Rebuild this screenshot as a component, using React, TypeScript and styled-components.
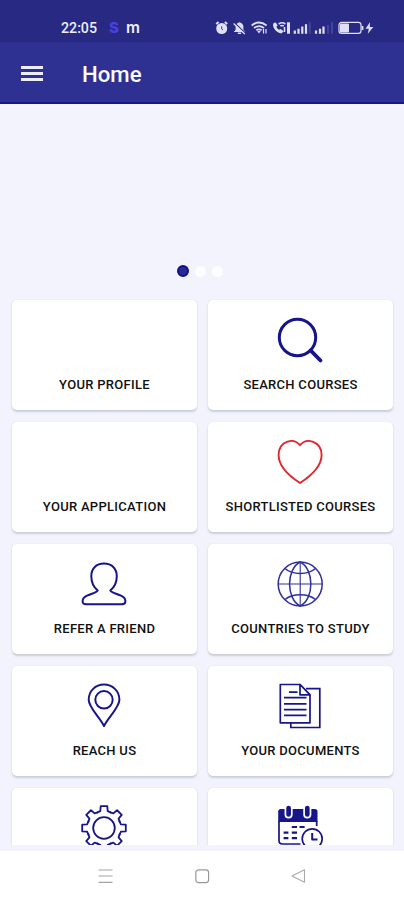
import React from 'react';
import styled, { createGlobalStyle } from 'styled-components';

const NAVY = '#17158a';

const GlobalStyle = createGlobalStyle`
  *, *::before, *::after { box-sizing: border-box; }
  body { margin: 0; font-family: Roboto, "Liberation Sans", sans-serif; }
`;

const Screen = styled.div`
  display: flex;
  flex-direction: column;
  width: 404px;
  height: 900px;
  overflow: hidden;
  background: #f2f3fc;
`;

const StatusBar = styled.div`
  display: flex;
  flex: none;
  align-items: center;
  height: 42px;
  padding: 14px 28px 0 61px;
  background: #272983;
  color: #eeeefb;
`;

const Clock = styled.span`
  width: 48px;
  font-size: 14.2px;
  font-weight: 500;
  line-height: 16px;
`;

const AppMark = styled.span<{ $color: string; $size: number; $width: number; $weight: number }>`
  width: ${(p) => p.$width}px;
  font-family: Inter, sans-serif;
  font-size: ${(p) => p.$size}px;
  font-weight: ${(p) => p.$weight};
  line-height: 16px;
  color: ${(p) => p.$color};
`;

const StatusIcons = styled.svg`
  display: block;
  margin-left: auto;
`;

const AppBar = styled.header`
  display: flex;
  flex: none;
  align-items: center;
  gap: 39px;
  height: 62px;
  padding: 2px 21px 0;
  background: #2e3192;
  border-bottom: 2px solid #17158a;
`;

const MenuButton = styled.button`
  display: flex;
  flex-direction: column;
  gap: 3px;
  width: 22px;
  padding: 0;
  border: 0;
  background: none;
`;

const MenuLine = styled.span`
  height: 3px;
  background: #ececfa;
`;

const Title = styled.h1`
  margin: 2px 0 0;
  font-size: 22.2px;
  font-weight: 500;
  line-height: 28px;
  color: #fafaff;
`;

const Content = styled.main`
  flex: none;
  height: 741px;
  overflow: hidden;
`;

const Carousel = styled.section`
  display: flex;
  align-items: flex-end;
  justify-content: center;
  gap: 6px;
  height: 196px;
  padding: 0 4px 23px 0;
`;

const Dot = styled.span<{ $active?: boolean }>`
  width: ${(p) => (p.$active ? 12 : 11)}px;
  height: ${(p) => (p.$active ? 12 : 11)}px;
  border: ${(p) => (p.$active ? '2px solid #10108c' : '0')};
  border-radius: 50%;
  background: ${(p) => (p.$active ? '#272a92' : '#fdfdff')};
`;

const Grid = styled.section`
  display: grid;
  grid-template-columns: 185px 185px;
  grid-auto-rows: 110px;
  gap: 12px 11px;
  padding-left: 12px;
`;

const Card = styled.article`
  display: flex;
  flex-direction: column;
  align-items: center;
  padding-top: 16px;
  border-radius: 5px;
  background: #fff;
  box-shadow: 0 1.5px 2px rgba(60, 64, 90, 0.2), 0 0 2px rgba(60, 64, 90, 0.06);
`;

const IconSlot = styled.div`
  width: 49px;
  height: 48px;
  margin-bottom: 12px;
`;

const Label = styled.span`
  font-size: 13px;
  font-weight: 500;
  line-height: 18px;
  letter-spacing: 0.29px;
  white-space: nowrap;
  color: #111;
`;

const BottomNav = styled.nav`
  display: flex;
  flex: none;
  align-items: center;
  justify-content: space-between;
  height: 49px;
  margin-top: 6px;
  padding: 0 97px;
  background: #fff;
`;

const Icon = ({ color = NAVY, width = 1.7, children }: { color?: string; width?: number; children: React.ReactNode }) => (
  <svg width="48" height="48" viewBox="0 0 48 48" fill="none" stroke={color} strokeWidth={width} strokeLinejoin="round">
    {children}
  </svg>
);

const SearchIcon = () => (
  <Icon width={3}>
    <circle cx="21.5" cy="21.5" r="18.2" />
    <path d="M34.6 34.4 L44.5 44.5" strokeWidth="3.8" strokeLinecap="round" />
  </Icon>
);

const HeartIcon = () => (
  <Icon color="#e3242b" width={1.9}>
    <path d="M24 7.2 C20.5 3 15.5 2.2 11.5 3.6 C5.5 5.7 2.6 11 2.6 17 C2.6 28 13.5 38.2 24 45 C34.5 38.2 45.6 28 45.6 17 C45.6 11 42.5 5.7 36.5 3.6 C32.5 2.2 27.5 3 24 7.2Z" />
  </Icon>
);

const PersonIcon = () => (
  <Icon width={2}>
    <path d="M17.7 30.5 C13.5 27 11.3 21.8 11.3 16.2 C11.3 8.5 16.3 3.5 24 3.5 C31.7 3.5 36.8 8.5 36.8 16.2 C36.8 21.8 34.5 27 30.3 30.5 C32 33 37 33.8 41 35.7 C44.4 37.3 45.4 39 45.4 41.3 C45.4 43.4 44.3 44.2 42 44.2 H6 C3.7 44.2 2.6 43.4 2.6 41.3 C2.6 39 3.6 37.3 7 35.7 C11 33.8 16 33 17.7 30.5Z" />
  </Icon>
);

const GlobeIcon = () => (
  <Icon width={1.5} color="#30309b">
    <circle cx="24.2" cy="24" r="22" />
    <path d="M24.2 2 V46 M2.2 24 H46.2" strokeWidth="1.1" />
    <path d="M24.2 2 C10 9 10 39 24.2 46 C38.4 39 38.4 9 24.2 2Z" />
    <path d="M9 8.5 C16 15 32.4 15 39.4 8.5 M9 39.5 C16 33 32.4 33 39.4 39.5" />
  </Icon>
);

const PinIcon = () => (
  <Icon width={2}>
    <path d="M24 44 C20 35.5 8.7 25.5 8.7 17.7 C8.7 9 15.5 2.6 24 2.6 C32.5 2.6 39.4 9 39.4 17.7 C39.4 25.5 28 35.5 24 44Z" />
    <circle cx="24" cy="17.8" r="8.7" />
  </Icon>
);

const DocumentsIcon = () => (
  <Icon width={1.7}>
    <path d="M14.8 41 V45.5 H43.8 V6.7 H30" strokeLinejoin="miter" />
    <path d="M4.3 2.5 H24 L34 13 V40.8 H4.3Z" fill="#fff" />
    <path d="M24 2.5 V12.8 H34Z" fill="#fff" />
    <path d="M13 10.2 H21.5 M8 15.7 H30.5 M8 21.8 H30.5 M8 27.7 H30.5 M8 33.3 H30.5" />
  </Icon>
);

const GEAR_TOOTH = 'M-7.3 -15.2 L-3.7 -16.9 L-3.3 -21.8 H3.3 L3.7 -16.9 L7.3 -15.2';

const GearIcon = () => (
  <Icon width={1.8}>
    <circle cx="24" cy="24" r="10.8" />
    {[0, 45, 90, 135, 180, 225, 270, 315].map((angle) => (
      <path key={angle} d={GEAR_TOOTH} transform={`translate(24 24) rotate(${angle})`} />
    ))}
  </Icon>
);

const CalendarIcon = () => (
  <Icon width={1.7}>
    <path d="M2.2 18 V7.5 Q2.2 5 5 5 H38.8 Q41.5 5 41.5 7.5 V18Z" fill={NAVY} stroke="none" />
    <path d="M3 17 V36.5 Q3 40 6.5 40 H24.5 M40.7 17 V22" />
    <rect x="9.4" y="0.8" width="6.4" height="12.8" rx="3.2" fill={NAVY} stroke="#fff" />
    <rect x="28.1" y="0.8" width="6.4" height="12.8" rx="3.2" fill={NAVY} stroke="#fff" />
    <path d="M15.8 23 H21 M23.5 23 H28.6 M7.6 28.6 H12.4 M15.8 28.6 H21 M7.6 34.2 H12.4 M15.8 34.2 H21" strokeWidth="2.2" />
    <circle cx="36.2" cy="34.8" r="10" fill="#fff" />
    <path d="M36.2 29 V35.5 H41.5" strokeWidth="2" />
  </Icon>
);

const tiles: { label: string; icon?: React.ReactNode }[] = [
  { label: 'YOUR PROFILE' },
  { label: 'SEARCH COURSES', icon: <SearchIcon /> },
  { label: 'YOUR APPLICATION' },
  { label: 'SHORTLISTED COURSES', icon: <HeartIcon /> },
  { label: 'REFER A FRIEND', icon: <PersonIcon /> },
  { label: 'COUNTRIES TO STUDY', icon: <GlobeIcon /> },
  { label: 'REACH US', icon: <PinIcon /> },
  { label: 'YOUR DOCUMENTS', icon: <DocumentsIcon /> },
  { label: '', icon: <GearIcon /> },
  { label: '', icon: <CalendarIcon /> },
];

const SystemIcons = () => (
  <StatusIcons width="162" height="16" viewBox="0 0 162 16" fill="none" stroke="#dfdff5" strokeWidth="1.4">
    {/* alarm */}
    <circle cx="7.7" cy="8.5" r="5.5" fill="#dfdff5" stroke="none" />
    <path d="M2.2 4 L4.6 2 M10.8 2 L13.2 4" strokeWidth="2" />
    <path d="M7.7 6.3 V8.8 L9 10" stroke="#272983" strokeWidth="0.9" />
    {/* muted bell */}
    <path d="M19.8 12 L21.6 9.7 V7 Q21.6 3.4 25.4 2.3 Q29.4 3.4 29.4 7 V9.7 L31.2 12Z M23.8 12.6 H27.2 V14 H23.8Z" fill="#dfdff5" stroke="none" />
    <path d="M20.4 2.7 L31.4 13.3" stroke="#272983" strokeWidth="1.2" />
    <path d="M19.6 3.4 L30.8 14" strokeWidth="1.4" />
    {/* wifi */}
    <path d="M37.6 5.5 Q45 -0.5 52.6 5.5 M40 8 Q45 4.2 50 8 M42.4 10.2 Q45 8.4 47.6 10.2" strokeWidth="1.8" />
    <path d="M43.2 11 H46.8 L45 13.4Z" fill="#dfdff5" stroke="none" />
    <path d="M49.5 9 V13.5 M52 9 V13.5" strokeWidth="1.2" />
    {/* call over wifi */}
    <path d="M59.6 3 Q58.2 5 59.6 7.6 Q62.2 12.8 67.2 13.6 L69.7 11.5 L66.8 9.1 L65 9.8 Q63 8.6 62.4 6.8 L63.6 5.4 L61.8 2.5Z" fill="#dfdff5" stroke="none" />
    <path d="M64.6 4 Q68 1.5 71.4 4 M66.3 6 Q68 5 69.8 6 M70.5 7 V12" strokeWidth="1.6" />
    <path d="M74.5 2.3 V13.7" strokeWidth="3" />
    {/* signal strength */}
    <path d="M80.8 10.5 V13.7 M84.5 8.7 V13.7 M88.3 6.5 V13.7 M92 4.2 V13.7" strokeWidth="2.2" />
    <path d="M95.8 2 V13.7 M114 5 V13.7 M118 2 V13.7" stroke="#42449c" strokeWidth="2" />
    <path d="M102 10.5 V13.7 M106 8.7 V13.7 M109.5 6.5 V13.7" strokeWidth="2.2" />
    {/* charging battery */}
    <rect x="125" y="2.4" width="22" height="11" rx="2.6" strokeWidth="1.2" />
    <rect x="126" y="3.6" width="9" height="8.8" rx="1" fill="#dfdff5" stroke="none" />
    <path d="M148.5 6 V10" strokeWidth="1.8" />
    <path d="M156 2.2 L151.5 8.7 H154.8 L153.8 13.8 L159.3 7.1 H155.8Z" fill="#dfdff5" stroke="none" />
  </StatusIcons>
);

export default function App() {
  return (
    <>
      <GlobalStyle />
      <Screen>
        <StatusBar>
          <Clock>22:05</Clock>
          <AppMark $color="#4a40e0" $size={15} $width={17} $weight={800}>S</AppMark>
          <AppMark $color="#eeeefb" $size={15.5} $width={16} $weight={600}>m</AppMark>
          <SystemIcons />
        </StatusBar>
        <AppBar>
          <MenuButton aria-label="Menu">
            <MenuLine />
            <MenuLine />
            <MenuLine />
          </MenuButton>
          <Title>Home</Title>
        </AppBar>
        <Content>
          <Carousel>
            <Dot $active />
            <Dot />
            <Dot />
          </Carousel>
          <Grid>
            {tiles.map((tile, index) => (
              <Card key={index}>
                <IconSlot>{tile.icon}</IconSlot>
                <Label>{tile.label}</Label>
              </Card>
            ))}
          </Grid>
        </Content>
        <BottomNav>
          <svg width="16" height="16" viewBox="0 0 16 16" stroke="#a3a3a3" strokeWidth="1.2">
            <path d="M1.5 2 H15.5 M1.5 8 H15.5 M1.5 14.3 H15.5" />
          </svg>
          <svg width="16" height="16" viewBox="0 0 16 16" fill="none" stroke="#999" strokeWidth="1.2">
            <rect x="1.8" y="1.8" width="12.8" height="12.8" rx="2.8" />
          </svg>
          <svg width="16" height="16" viewBox="0 0 16 16" fill="none" stroke="#aaa" strokeWidth="1.1" strokeLinejoin="round">
            <path d="M1 8 L13.5 1.8 V14.2Z" />
          </svg>
        </BottomNav>
      </Screen>
    </>
  );
}
